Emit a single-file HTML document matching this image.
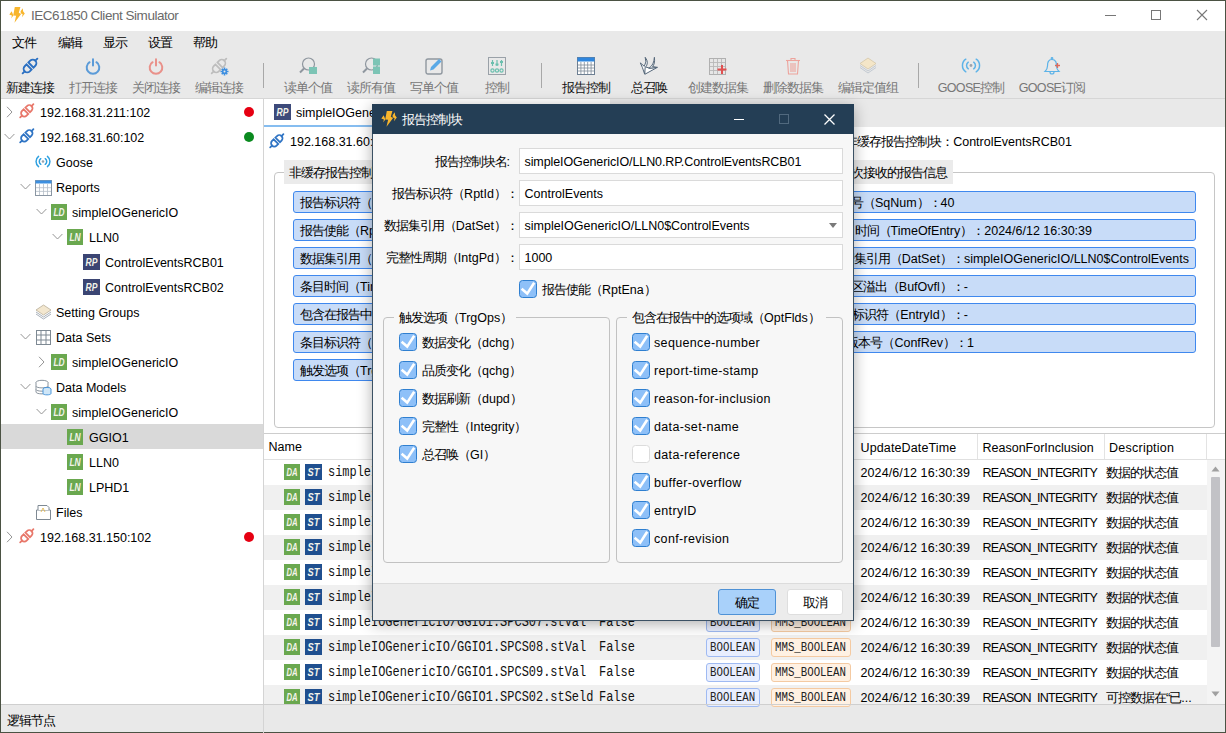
<!DOCTYPE html><html><head><meta charset="utf-8"><style>
*{box-sizing:border-box}
html,body{margin:0;padding:0}
body{width:1226px;height:733px;overflow:hidden;position:relative;background:#4b5243;font-family:"Liberation Sans",sans-serif;font-size:13px;color:#000}
.a{position:absolute}
.t{white-space:nowrap}
svg{overflow:visible}
</style></head><body><div class="a" style="left:1px;top:1px;width:1224px;height:731px;background:#ffffff;"></div><svg class="a" style="left:0px;top:0px" width="30" height="30" viewBox="0 0 30 30"><path d="M14.8 7.1 L20.4 7.1 L18.8 12.8 L21.1 14.1 L14.5 22.7 L16.1 15.8 L13.2 15.5 Z" fill="#f8b62d"/><path d="M9.3 14.6 L11.7 11.3 L12.6 13.6 L13.3 15.6 L11.2 18.6 L11.9 15.4 Z" fill="#f8b62d"/><path d="M20.6 11.2 L22.7 8.3 L23.2 11.6 L24.8 13.6 L22 17.3 L22.6 14 L20.8 13.4 Z" fill="#f8b62d"/></svg><div class="a t" style="left:31px;top:5.699999999999999px;height:20px;line-height:20px;font-size:13.5px;color:#6a6a6a;letter-spacing:-0.47px;">IEC61850 Client Simulator</div><div class="a" style="left:1105px;top:15px;width:11px;height:1px;background:#777;"></div><div class="a" style="left:1151px;top:10px;width:10px;height:10px;background:none;border:1px solid #777"></div><svg class="a" style="left:1196px;top:9px" width="12" height="12" viewBox="0 0 12 12"><path d="M1 1 L11 11 M11 1 L1 11" stroke="#777" stroke-width="1.1"/></svg><div class="a" style="left:1px;top:31px;width:1224px;height:67px;background:#e9e9e9;"></div><div class="a" style="left:1px;top:98px;width:1224px;height:1px;background:#d6d6d6;"></div><div class="a t" style="left:12px;top:33.0px;height:20px;line-height:20px;font-size:13px;color:#000;letter-spacing:-1.0px;">文件</div><div class="a t" style="left:58px;top:33.0px;height:20px;line-height:20px;font-size:13px;color:#000;letter-spacing:-1.0px;">编辑</div><div class="a t" style="left:103px;top:33.0px;height:20px;line-height:20px;font-size:13px;color:#000;letter-spacing:-1.0px;">显示</div><div class="a t" style="left:148px;top:33.0px;height:20px;line-height:20px;font-size:13px;color:#000;letter-spacing:-1.0px;">设置</div><div class="a t" style="left:193px;top:33.0px;height:20px;line-height:20px;font-size:13px;color:#000;letter-spacing:-1.0px;">帮助</div><svg class="a" style="left:18px;top:53.7px" width="24" height="24" viewBox="0 0 24 24"><g transform="rotate(-45 12 12)" fill="none" stroke="#2b70c2" stroke-width="1.9" stroke-linecap="round"><path d="M10.6 8.4 H8.1 A3.6 3.6 0 0 0 8.1 15.6 H10.6 Z"/><path d="M13.4 8.4 H15.9 A3.6 3.6 0 0 1 15.9 15.6 H13.4 Z"/><path d="M1.6 12 H4.5 M19.5 12 H22.4"/></g></svg><div class="a t" style="left:-20px;top:77.5px;height:20px;line-height:20px;font-size:13px;color:#111;letter-spacing:-1.0px;width:100px;text-align:center;">新建连接</div><svg class="a" style="left:85px;top:57.5px" width="16" height="16" viewBox="0 0 16 16"><g fill="none" stroke="#5b9bd8" stroke-width="2" stroke-linecap="round"><path d="M4.6 4.2 A6.3 6.3 0 1 0 11.4 4.2"/><line x1="8" y1="1.2" x2="8" y2="7.5"/></g></svg><div class="a t" style="left:43px;top:77.5px;height:20px;line-height:20px;font-size:13px;color:#777;letter-spacing:-1.0px;width:100px;text-align:center;">打开连接</div><svg class="a" style="left:148px;top:57.5px" width="16" height="16" viewBox="0 0 16 16"><g fill="none" stroke="#e9918a" stroke-width="2" stroke-linecap="round"><path d="M4.6 4.2 A6.3 6.3 0 1 0 11.4 4.2"/><line x1="8" y1="1.2" x2="8" y2="7.5"/></g></svg><div class="a t" style="left:106px;top:77.5px;height:20px;line-height:20px;font-size:13px;color:#777;letter-spacing:-1.0px;width:100px;text-align:center;">关闭连接</div><svg class="a" style="left:207px;top:53.7px" width="24" height="24" viewBox="0 0 24 24"><g transform="rotate(-45 12 12)" fill="none" stroke="#bdbdbd" stroke-width="1.7" stroke-linecap="round"><path d="M10.6 8.4 H8.1 A3.6 3.6 0 0 0 8.1 15.6 H10.6 Z"/><path d="M13.4 8.4 H15.9 A3.6 3.6 0 0 1 15.9 15.6 H13.4 Z"/><path d="M1.6 12 H4.5 M19.5 12 H22.4"/></g><g transform="translate(17.5 17.5)"><circle r="2.6" fill="#3d8fe0"/><g stroke="#3d8fe0" stroke-width="1.6"><path d="M0 -4 V4 M-4 0 H4 M-2.8 -2.8 L2.8 2.8 M2.8 -2.8 L-2.8 2.8"/></g><circle r="1" fill="#e9e9e9"/></g></svg><div class="a t" style="left:169px;top:77.5px;height:20px;line-height:20px;font-size:13px;color:#777;letter-spacing:-1.0px;width:100px;text-align:center;">编辑连接</div><svg class="a" style="left:299px;top:57px" width="18" height="18" viewBox="0 0 18 18"><circle cx="9.5" cy="7" r="6" fill="none" stroke="#8f979f" stroke-width="1.2"/><line x1="5" y1="11.5" x2="1" y2="15.5" stroke="#8f979f" stroke-width="2"/><rect x="10" y="10" width="8" height="7" fill="#7cc4b5"/></svg><div class="a t" style="left:258px;top:77.5px;height:20px;line-height:20px;font-size:13px;color:#777;letter-spacing:-1.0px;width:100px;text-align:center;">读单个值</div><svg class="a" style="left:362px;top:57px" width="18" height="18" viewBox="0 0 18 18"><circle cx="9.5" cy="7" r="6" fill="none" stroke="#8f979f" stroke-width="1.2"/><line x1="5" y1="11.5" x2="1" y2="15.5" stroke="#8f979f" stroke-width="2"/><rect x="11" y="1.5" width="7" height="7" fill="#7cc4b5"/><rect x="11" y="9.5" width="7" height="7.5" fill="#7cc4b5"/></svg><div class="a t" style="left:321px;top:77.5px;height:20px;line-height:20px;font-size:13px;color:#777;letter-spacing:-1.0px;width:100px;text-align:center;">读所有值</div><svg class="a" style="left:425px;top:57px" width="18" height="18" viewBox="0 0 18 18"><rect x="1" y="2" width="16" height="15" rx="2" fill="none" stroke="#8f979f" stroke-width="1.4"/><path d="M5 13.5 L6 10 L14 2 L16.5 4.5 L8.5 12.5 Z" fill="#5aa9e6"/></svg><div class="a t" style="left:384px;top:77.5px;height:20px;line-height:20px;font-size:13px;color:#777;letter-spacing:-1.0px;width:100px;text-align:center;">写单个值</div><svg class="a" style="left:488px;top:57px" width="18" height="18" viewBox="0 0 18 18"><rect x="0.5" y="0.5" width="17" height="17" fill="none" stroke="#9aa1a8" stroke-width="1"/><g stroke="#6bbfae" stroke-width="1.2" fill="none"><line x1="4.5" y1="3" x2="4.5" y2="9"/><line x1="9" y1="3" x2="9" y2="9"/><line x1="13.5" y1="3" x2="13.5" y2="9"/><circle cx="4.5" cy="13.5" r="1.6"/><circle cx="9" cy="13.5" r="1.6"/><circle cx="13.5" cy="13.5" r="1.6"/></g><rect x="3" y="5" width="3" height="2" fill="#6bbfae"/><rect x="7.5" y="6.5" width="3" height="2" fill="#6bbfae"/><rect x="12" y="4" width="3" height="2" fill="#6bbfae"/></svg><div class="a t" style="left:447px;top:77.5px;height:20px;line-height:20px;font-size:13px;color:#777;letter-spacing:-1.0px;width:100px;text-align:center;">控制</div><svg class="a" style="left:577px;top:57px" width="18" height="18" viewBox="0 0 18 18"><rect x="0.5" y="0.5" width="17" height="17" fill="#fff" stroke="#6d7f92" stroke-width="1"/><rect x="0.5" y="0.5" width="17" height="4" fill="#2f86de"/><g stroke="#7d8a98" stroke-width="0.8"><line x1="3.9" y1="5" x2="3.9" y2="17"/><line x1="7.3" y1="5" x2="7.3" y2="17"/><line x1="10.7" y1="5" x2="10.7" y2="17"/><line x1="14.1" y1="5" x2="14.1" y2="17"/><line x1="1" y1="8" x2="17" y2="8"/><line x1="1" y1="11" x2="17" y2="11"/><line x1="1" y1="14" x2="17" y2="14"/></g></svg><div class="a t" style="left:536px;top:77.5px;height:20px;line-height:20px;font-size:13px;color:#111;letter-spacing:-1.0px;width:100px;text-align:center;">报告控制</div><svg class="a" style="left:637px;top:54px" width="24" height="24" viewBox="0 0 24 24"><g fill="#fff" stroke="#56687a" stroke-width="1" stroke-linejoin="round"><path d="M7.3 12.6 L7.8 20.3 L20.3 13.4 L12.8 14.2 Z"/><path d="M3.3 8.9 Q5.5 13 7.6 20 L8.2 13.5 Q12.5 9 8.2 3.3 Q10 8 7.3 12.3 Z"/><path d="M11.8 14.3 Q17 11 17.4 3.3 Q18.2 10 15.5 12.5 L20.3 13.4 Z"/></g></svg><div class="a t" style="left:599px;top:77.5px;height:20px;line-height:20px;font-size:13px;color:#111;letter-spacing:-1.0px;width:100px;text-align:center;">总召唤</div><svg class="a" style="left:709px;top:57px" width="18" height="18" viewBox="0 0 18 18"><rect x="0.5" y="1.5" width="16" height="16" fill="#e6e6e6" stroke="#b0b0b0" stroke-width="1"/><g stroke="#b8b8b8" stroke-width="0.9"><line x1="4.5" y1="2" x2="4.5" y2="17"/><line x1="8.5" y1="2" x2="8.5" y2="17"/><line x1="12.5" y1="2" x2="12.5" y2="17"/><line x1="1" y1="5.5" x2="16" y2="5.5"/><line x1="1" y1="9.5" x2="16" y2="9.5"/><line x1="1" y1="13.5" x2="16" y2="13.5"/></g><path d="M13 8 V17 M8.5 12.5 H17.5" stroke="#e05050" stroke-width="2"/></svg><div class="a t" style="left:668px;top:77.5px;height:20px;line-height:20px;font-size:13px;color:#777;letter-spacing:-1.0px;width:100px;text-align:center;">创建数据集</div><svg class="a" style="left:785px;top:57px" width="16" height="18" viewBox="0 0 16 18"><g fill="none" stroke="#eda39c" stroke-width="1.1"><path d="M1 3.5 H15"/><path d="M6 3.5 V1.5 H10 V3.5"/><path d="M2.5 3.5 L3.5 17 H12.5 L13.5 3.5"/><path d="M6 6 V15 M8 6 V15 M10 6 V15"/></g></svg><div class="a t" style="left:743px;top:77.5px;height:20px;line-height:20px;font-size:13px;color:#777;letter-spacing:-1.0px;width:100px;text-align:center;">删除数据集</div><svg class="a" style="left:859px;top:57px" width="18" height="18" viewBox="0 0 18 18"><path d="M9 1 L17 6.5 L9 12 L1 6.5 Z" fill="#f4e6c8" stroke="#d4c7a8" stroke-width="0.8"/><path d="M1 8.5 L9 14 L17 8.5 M1 10.5 L9 16 L17 10.5" fill="none" stroke="#c3cad2" stroke-width="1"/></svg><div class="a t" style="left:818px;top:77.5px;height:20px;line-height:20px;font-size:13px;color:#777;letter-spacing:-1.0px;width:100px;text-align:center;">编辑定值组</div><svg class="a" style="left:962px;top:58px" width="18" height="15" viewBox="0 0 18 15"><g fill="none" stroke="#5db3e8" stroke-width="1.5" stroke-linecap="round"><path d="M3.8 1.2 A7.6 7.6 0 0 0 3.8 13.8"/><path d="M14.2 1.2 A7.6 7.6 0 0 1 14.2 13.8"/><path d="M6.3 4.2 A4 4 0 0 0 6.3 10.8"/><path d="M11.7 4.2 A4 4 0 0 1 11.7 10.8"/></g><circle cx="9" cy="7.5" r="1.4" fill="#9aa3ad"/></svg><div class="a t" style="left:921px;top:77.5px;height:20px;line-height:20px;font-size:13px;color:#777;letter-spacing:-1.0px;width:100px;text-align:center;"><span style="font-size:12.5px;letter-spacing:-0.7px">GOOSE</span>控制</div><svg class="a" style="left:1043.5px;top:57px" width="17" height="18" viewBox="0 0 17 18"><g fill="none" stroke="#5db3e8" stroke-width="1.2"><path d="M8 2.5 C4 2.5 3.5 6 3.5 9 C3.5 12 2.5 13 1 14.5 H15 C13.5 13 12.5 12 12.5 9 C12.5 6 12 2.5 8 2.5 Z"/><path d="M6 15 A2 2 0 0 0 10 15"/><circle cx="8" cy="1.5" r="0.8"/></g><path d="M11 8.5 H16 M13.5 6 V11" stroke="#e06a5a" stroke-width="1.3"/></svg><div class="a t" style="left:1002px;top:77.5px;height:20px;line-height:20px;font-size:13px;color:#777;letter-spacing:-1.0px;width:100px;text-align:center;"><span style="font-size:12.5px;letter-spacing:-0.7px">GOOSE</span>订阅</div><div class="a" style="left:263px;top:63px;width:1px;height:25px;background:#a8a8a8;"></div><div class="a" style="left:541px;top:63px;width:1px;height:25px;background:#a8a8a8;"></div><div class="a" style="left:918px;top:63px;width:1px;height:25px;background:#a8a8a8;"></div><div class="a" style="left:263px;top:99px;width:1px;height:634px;background:#d4d4d4;"></div><div class="a" style="left:1px;top:704px;width:1224px;height:1px;background:#cfcfcf;"></div><div class="a" style="left:1px;top:705px;width:1224px;height:27px;background:#e9e9e9;"></div><div class="a" style="left:263px;top:705px;width:1px;height:27px;background:#d4d4d4;"></div><div class="a t" style="left:7px;top:710.8px;height:20px;line-height:20px;font-size:13px;color:#000;letter-spacing:-1.0px;">逻辑节点</div><svg class="a" style="left:6.0px;top:105.5px" width="7" height="12" viewBox="0 0 7 12"><path d="M1 0.8 L6 6 L1 11.2" fill="none" stroke="#969696" stroke-width="1"/></svg><svg class="a" style="left:15.8px;top:100.2px" width="21.6" height="21.6" viewBox="0 0 24 24"><g transform="rotate(-45 12 12)" fill="none" stroke="#e8776a" stroke-width="2.0" stroke-linecap="round"><path d="M10.6 8.4 H8.1 A3.6 3.6 0 0 0 8.1 15.6 H10.6 Z"/><path d="M13.4 8.4 H15.9 A3.6 3.6 0 0 1 15.9 15.6 H13.4 Z"/><path d="M1.6 12 H4.5 M19.5 12 H22.4"/></g></svg><div class="a t" style="left:40px;top:103.0px;height:20px;line-height:20px;font-size:12.5px;color:#000;">192.168.31.211:102</div><svg class="a" style="left:244px;top:106.5px" width="10" height="10" viewBox="0 0 10 10"><circle cx="5" cy="5" r="5" fill="#e60012"/></svg><svg class="a" style="left:4.0px;top:133.0px" width="11" height="7" viewBox="0 0 11 7"><path d="M0.6 1 L5.5 6 L10.4 1" fill="none" stroke="#969696" stroke-width="1"/></svg><svg class="a" style="left:15.8px;top:125.2px" width="21.6" height="21.6" viewBox="0 0 24 24"><g transform="rotate(-45 12 12)" fill="none" stroke="#2f74c4" stroke-width="2.0" stroke-linecap="round"><path d="M10.6 8.4 H8.1 A3.6 3.6 0 0 0 8.1 15.6 H10.6 Z"/><path d="M13.4 8.4 H15.9 A3.6 3.6 0 0 1 15.9 15.6 H13.4 Z"/><path d="M1.6 12 H4.5 M19.5 12 H22.4"/></g></svg><div class="a t" style="left:40px;top:128.0px;height:20px;line-height:20px;font-size:12.5px;color:#000;">192.168.31.60:102</div><svg class="a" style="left:244px;top:131.5px" width="10" height="10" viewBox="0 0 10 10"><circle cx="5" cy="5" r="5" fill="#0a8a1f"/></svg><svg class="a" style="left:35px;top:155.0px" width="16" height="13" viewBox="0 0 16 14"><g fill="none" stroke="#2ea0e0" stroke-width="1.6" stroke-linecap="round"><path d="M3.2 1.5 A7 7 0 0 0 3.2 12.5"/><path d="M12.8 1.5 A7 7 0 0 1 12.8 12.5"/><path d="M5.6 4 A3.6 3.6 0 0 0 5.6 10"/><path d="M10.4 4 A3.6 3.6 0 0 1 10.4 10"/></g><circle cx="8" cy="7" r="1.4" fill="#9aa3ad"/></svg><div class="a t" style="left:56px;top:153.0px;height:20px;line-height:20px;font-size:12.5px;color:#000;">Goose</div><svg class="a" style="left:20.0px;top:183.0px" width="11" height="7" viewBox="0 0 11 7"><path d="M0.6 1 L5.5 6 L10.4 1" fill="none" stroke="#969696" stroke-width="1"/></svg><svg class="a" style="left:35px;top:178.5px" width="17" height="17" viewBox="0 0 17 17"><rect x="0.5" y="1.5" width="16" height="15" fill="#fff" stroke="#8a96a3" stroke-width="1"/><rect x="0.5" y="1.5" width="16" height="3" fill="#3d8fe0"/><line x1="4.5" y1="5" x2="4.5" y2="16" stroke="#b5bec8" stroke-width="0.8"/><line x1="8.5" y1="5" x2="8.5" y2="16" stroke="#b5bec8" stroke-width="0.8"/><line x1="12.5" y1="5" x2="12.5" y2="16" stroke="#b5bec8" stroke-width="0.8"/><line x1="1" y1="8.7" x2="16" y2="8.7" stroke="#b5bec8" stroke-width="0.8"/><line x1="1" y1="12.4" x2="16" y2="12.4" stroke="#b5bec8" stroke-width="0.8"/></svg><div class="a t" style="left:56px;top:178.0px;height:20px;line-height:20px;font-size:12.5px;color:#000;">Reports</div><svg class="a" style="left:36.0px;top:208.0px" width="11" height="7" viewBox="0 0 11 7"><path d="M0.6 1 L5.5 6 L10.4 1" fill="none" stroke="#969696" stroke-width="1"/></svg><svg class="a" style="left:51px;top:203.5px" width="16" height="16" viewBox="0 0 16 16"><rect x="0" y="0" width="16" height="16" fill="#6aa84f"/><text x="2.4000000000000004" y="11.78" font-family="Liberation Sans" font-style="italic" font-weight="bold" font-size="10.5" fill="#f3f3ea" textLength="11.2" lengthAdjust="spacingAndGlyphs">LD</text></svg><div class="a t" style="left:72px;top:203.0px;height:20px;line-height:20px;font-size:12.5px;color:#000;">simpleIOGenericIO</div><svg class="a" style="left:52.0px;top:233.0px" width="11" height="7" viewBox="0 0 11 7"><path d="M0.6 1 L5.5 6 L10.4 1" fill="none" stroke="#969696" stroke-width="1"/></svg><svg class="a" style="left:67px;top:228.5px" width="16" height="16" viewBox="0 0 16 16"><rect x="0" y="0" width="16" height="16" fill="#6aa84f"/><text x="2.4000000000000004" y="11.78" font-family="Liberation Sans" font-style="italic" font-weight="bold" font-size="10.5" fill="#f3f3ea" textLength="11.2" lengthAdjust="spacingAndGlyphs">LN</text></svg><div class="a t" style="left:89px;top:228.0px;height:20px;line-height:20px;font-size:12.5px;color:#000;">LLN0</div><svg class="a" style="left:83px;top:253.5px" width="17" height="16" viewBox="0 0 17 16"><rect x="0" y="0" width="17" height="16" fill="#3b4573"/><text x="2.5500000000000007" y="11.78" font-family="Liberation Sans" font-style="italic" font-weight="bold" font-size="10.5" fill="#f3f3ea" textLength="11.899999999999999" lengthAdjust="spacingAndGlyphs">RP</text></svg><div class="a t" style="left:105px;top:253.0px;height:20px;line-height:20px;font-size:12.5px;color:#000;">ControlEventsRCB01</div><svg class="a" style="left:83px;top:278.5px" width="17" height="16" viewBox="0 0 17 16"><rect x="0" y="0" width="17" height="16" fill="#3b4573"/><text x="2.5500000000000007" y="11.78" font-family="Liberation Sans" font-style="italic" font-weight="bold" font-size="10.5" fill="#f3f3ea" textLength="11.899999999999999" lengthAdjust="spacingAndGlyphs">RP</text></svg><div class="a t" style="left:105px;top:278.0px;height:20px;line-height:20px;font-size:12.5px;color:#000;">ControlEventsRCB02</div><svg class="a" style="left:35px;top:303.5px" width="17" height="17" viewBox="0 0 17 17"><path d="M8.5 1 L16 6 L8.5 11 L1 6 Z" fill="#f3e7cf" stroke="#b8ad98" stroke-width="0.8"/><path d="M1 8 L8.5 13 L16 8 M1 10 L8.5 15 L16 10" fill="none" stroke="#a9b1ba" stroke-width="1"/></svg><div class="a t" style="left:56px;top:303.0px;height:20px;line-height:20px;font-size:12.5px;color:#000;">Setting Groups</div><svg class="a" style="left:20.0px;top:333.0px" width="11" height="7" viewBox="0 0 11 7"><path d="M0.6 1 L5.5 6 L10.4 1" fill="none" stroke="#969696" stroke-width="1"/></svg><svg class="a" style="left:35px;top:328.5px" width="17" height="17" viewBox="0 0 17 17"><rect x="1.5" y="1.5" width="14" height="14" fill="#fff" stroke="#7e8993" stroke-width="1"/><path d="M6 1.5 V15.5 M11 1.5 V15.5 M1.5 6 H15.5 M1.5 11 H15.5" stroke="#7e8993" stroke-width="1"/></svg><div class="a t" style="left:56px;top:328.0px;height:20px;line-height:20px;font-size:12.5px;color:#000;">Data Sets</div><svg class="a" style="left:38.0px;top:355.5px" width="7" height="12" viewBox="0 0 7 12"><path d="M1 0.8 L6 6 L1 11.2" fill="none" stroke="#969696" stroke-width="1"/></svg><svg class="a" style="left:51px;top:353.5px" width="16" height="16" viewBox="0 0 16 16"><rect x="0" y="0" width="16" height="16" fill="#6aa84f"/><text x="2.4000000000000004" y="11.78" font-family="Liberation Sans" font-style="italic" font-weight="bold" font-size="10.5" fill="#f3f3ea" textLength="11.2" lengthAdjust="spacingAndGlyphs">LD</text></svg><div class="a t" style="left:72px;top:353.0px;height:20px;line-height:20px;font-size:12.5px;color:#000;">simpleIOGenericIO</div><svg class="a" style="left:20.0px;top:383.0px" width="11" height="7" viewBox="0 0 11 7"><path d="M0.6 1 L5.5 6 L10.4 1" fill="none" stroke="#969696" stroke-width="1"/></svg><svg class="a" style="left:35px;top:378.5px" width="17" height="17" viewBox="0 0 17 17"><g fill="#fff" stroke="#8a949e" stroke-width="1"><ellipse cx="7" cy="3.5" rx="6" ry="2.2"/><path d="M1 3.5 V13 C1 15.5 13 15.5 13 13 V3.5"/><path d="M1 7 C1 9.5 13 9.5 13 7 M1 10.3 C1 12.8 13 12.8 13 10.3"/></g><g fill="#cfe6f7" stroke="#3d8fd8" stroke-width="0.9"><ellipse cx="12" cy="10" rx="4" ry="1.6"/><path d="M8 10 V14.5 C8 16.3 16 16.3 16 14.5 V10"/></g></svg><div class="a t" style="left:56px;top:378.0px;height:20px;line-height:20px;font-size:12.5px;color:#000;">Data Models</div><svg class="a" style="left:36.0px;top:408.0px" width="11" height="7" viewBox="0 0 11 7"><path d="M0.6 1 L5.5 6 L10.4 1" fill="none" stroke="#969696" stroke-width="1"/></svg><svg class="a" style="left:51px;top:403.5px" width="16" height="16" viewBox="0 0 16 16"><rect x="0" y="0" width="16" height="16" fill="#6aa84f"/><text x="2.4000000000000004" y="11.78" font-family="Liberation Sans" font-style="italic" font-weight="bold" font-size="10.5" fill="#f3f3ea" textLength="11.2" lengthAdjust="spacingAndGlyphs">LD</text></svg><div class="a t" style="left:72px;top:403.0px;height:20px;line-height:20px;font-size:12.5px;color:#000;">simpleIOGenericIO</div><div class="a" style="left:1px;top:424px;width:262px;height:25px;background:#d9d9d9;"></div><svg class="a" style="left:67px;top:428.5px" width="16" height="16" viewBox="0 0 16 16"><rect x="0" y="0" width="16" height="16" fill="#6aa84f"/><text x="2.4000000000000004" y="11.78" font-family="Liberation Sans" font-style="italic" font-weight="bold" font-size="10.5" fill="#f3f3ea" textLength="11.2" lengthAdjust="spacingAndGlyphs">LN</text></svg><div class="a t" style="left:89px;top:428.0px;height:20px;line-height:20px;font-size:12.5px;color:#000;">GGIO1</div><svg class="a" style="left:67px;top:453.5px" width="16" height="16" viewBox="0 0 16 16"><rect x="0" y="0" width="16" height="16" fill="#6aa84f"/><text x="2.4000000000000004" y="11.78" font-family="Liberation Sans" font-style="italic" font-weight="bold" font-size="10.5" fill="#f3f3ea" textLength="11.2" lengthAdjust="spacingAndGlyphs">LN</text></svg><div class="a t" style="left:89px;top:453.0px;height:20px;line-height:20px;font-size:12.5px;color:#000;">LLN0</div><svg class="a" style="left:67px;top:478.5px" width="16" height="16" viewBox="0 0 16 16"><rect x="0" y="0" width="16" height="16" fill="#6aa84f"/><text x="2.4000000000000004" y="11.78" font-family="Liberation Sans" font-style="italic" font-weight="bold" font-size="10.5" fill="#f3f3ea" textLength="11.2" lengthAdjust="spacingAndGlyphs">LN</text></svg><div class="a t" style="left:89px;top:478.0px;height:20px;line-height:20px;font-size:12.5px;color:#000;">LPHD1</div><svg class="a" style="left:35px;top:503.5px" width="17" height="17" viewBox="0 0 17 17"><path d="M1.5 6 H15.5 V15.5 H1.5 Z" fill="#fff" stroke="#7e8993" stroke-width="1"/><path d="M3 6 V1.5 H12 L14 3.5 V6" fill="#fff" stroke="#7e8993" stroke-width="1"/><path d="M6 8 L8 4 L10 8" fill="none" stroke="#e0b040" stroke-width="0.8"/></svg><div class="a t" style="left:56px;top:503.0px;height:20px;line-height:20px;font-size:12.5px;color:#000;">Files</div><svg class="a" style="left:6.0px;top:530.5px" width="7" height="12" viewBox="0 0 7 12"><path d="M1 0.8 L6 6 L1 11.2" fill="none" stroke="#969696" stroke-width="1"/></svg><svg class="a" style="left:15.8px;top:525.2px" width="21.6" height="21.6" viewBox="0 0 24 24"><g transform="rotate(-45 12 12)" fill="none" stroke="#e8776a" stroke-width="2.0" stroke-linecap="round"><path d="M10.6 8.4 H8.1 A3.6 3.6 0 0 0 8.1 15.6 H10.6 Z"/><path d="M13.4 8.4 H15.9 A3.6 3.6 0 0 1 15.9 15.6 H13.4 Z"/><path d="M1.6 12 H4.5 M19.5 12 H22.4"/></g></svg><div class="a t" style="left:40px;top:528.0px;height:20px;line-height:20px;font-size:12.5px;color:#000;">192.168.31.150:102</div><svg class="a" style="left:244px;top:531.5px" width="10" height="10" viewBox="0 0 10 10"><circle cx="5" cy="5" r="5" fill="#e60012"/></svg><div class="a" style="left:264px;top:99px;width:961px;height:28px;background:#e9e9e9;"></div><div class="a" style="left:264px;top:99px;width:346px;height:28px;background:#ffffff;"></div><div class="a" style="left:264px;top:125px;width:346px;height:2px;background:#86bdf0;"></div><svg class="a" style="left:274px;top:104px" width="17" height="16" viewBox="0 0 17 16"><rect x="0" y="0" width="17" height="16" fill="#3d4a7a"/><text x="2.5500000000000007" y="11.78" font-family="Liberation Sans" font-style="italic" font-weight="bold" font-size="10.5" fill="#f3f3ea" textLength="11.899999999999999" lengthAdjust="spacingAndGlyphs">RP</text></svg><div class="a t" style="left:296px;top:103.0px;height:20px;line-height:20px;font-size:12.5px;color:#000;">simpleIOGenericIO/LLN0.RP.ControlEventsRCB01</div><svg class="a" style="left:266px;top:130.3px" width="21.6" height="21.6" viewBox="0 0 24 24"><g transform="rotate(-45 12 12)" fill="none" stroke="#2f74c4" stroke-width="2.0" stroke-linecap="round"><path d="M10.6 8.4 H8.1 A3.6 3.6 0 0 0 8.1 15.6 H10.6 Z"/><path d="M13.4 8.4 H15.9 A3.6 3.6 0 0 1 15.9 15.6 H13.4 Z"/><path d="M1.6 12 H4.5 M19.5 12 H22.4"/></g></svg><div class="a t" style="left:290px;top:131.8px;height:20px;line-height:20px;font-size:12.5px;color:#000;">192.168.31.60:102</div><div class="a t" style="left:772px;top:131.8px;height:20px;line-height:20px;font-size:13px;color:#000;letter-spacing:-1.0px;width:300px;text-align:right;">非缓存报告控制块：<span style="font-size:12.5px;letter-spacing:0px">ControlEventsRCB01</span></div><div class="a" style="left:274px;top:172px;width:520px;height:256px;background:none;border:1px solid #c6c6c6;border-radius:4px"></div><div class="a" style="left:812px;top:172px;width:403px;height:256px;background:none;border:1px solid #c6c6c6;border-radius:4px"></div><div class="a" style="left:284px;top:160px;width:150px;height:24px;background:#ebebeb;"></div><div class="a t" style="left:289px;top:163.0px;height:20px;line-height:20px;font-size:13px;color:#000;letter-spacing:-1.0px;">非缓存报告控制块参数</div><div class="a" style="left:800px;top:160px;width:153px;height:24px;background:#ebebeb;"></div><div class="a t" style="left:653px;top:163.0px;height:20px;line-height:20px;font-size:13px;color:#000;letter-spacing:-1.0px;width:294px;text-align:right;">最近一次接收的报告信息</div><div class="a" style="left:293px;top:191px;width:490px;height:22px;background:#c8dcf8;border:1px solid #3f88ee;border-radius:3px"></div><div class="a t" style="left:300px;top:193.0px;height:20px;line-height:20px;font-size:13px;color:#000;letter-spacing:-1.0px;">报告标识符（<span style="font-size:12.5px;letter-spacing:0px">RptId</span>）：<span style="font-size:12.5px;letter-spacing:0px">ControlEvents</span></div><div class="a" style="left:293px;top:219px;width:490px;height:22px;background:#c8dcf8;border:1px solid #3f88ee;border-radius:3px"></div><div class="a t" style="left:300px;top:221.0px;height:20px;line-height:20px;font-size:13px;color:#000;letter-spacing:-1.0px;">报告使能（<span style="font-size:12.5px;letter-spacing:0px">RptEna</span>）：<span style="font-size:12.5px;letter-spacing:0px">True</span></div><div class="a" style="left:293px;top:247px;width:490px;height:22px;background:#c8dcf8;border:1px solid #3f88ee;border-radius:3px"></div><div class="a t" style="left:300px;top:249.0px;height:20px;line-height:20px;font-size:13px;color:#000;letter-spacing:-1.0px;">数据集引用（<span style="font-size:12.5px;letter-spacing:0px">DatSet</span>）：<span style="font-size:12.5px;letter-spacing:0px">simpleIOGenericIO/LLN0$ControlEvents</span></div><div class="a" style="left:293px;top:275px;width:490px;height:22px;background:#c8dcf8;border:1px solid #3f88ee;border-radius:3px"></div><div class="a t" style="left:300px;top:277.0px;height:20px;line-height:20px;font-size:13px;color:#000;letter-spacing:-1.0px;">条目时间（<span style="font-size:12.5px;letter-spacing:0px">TimeOfEntry</span>）：<span style="font-size:12.5px;letter-spacing:0px">-</span></div><div class="a" style="left:293px;top:303px;width:490px;height:22px;background:#c8dcf8;border:1px solid #3f88ee;border-radius:3px"></div><div class="a t" style="left:300px;top:305.0px;height:20px;line-height:20px;font-size:13px;color:#000;letter-spacing:-1.0px;">包含在报告中的选项域（<span style="font-size:12.5px;letter-spacing:0px">OptFlds</span>）：</div><div class="a" style="left:293px;top:331px;width:490px;height:22px;background:#c8dcf8;border:1px solid #3f88ee;border-radius:3px"></div><div class="a t" style="left:300px;top:333.0px;height:20px;line-height:20px;font-size:13px;color:#000;letter-spacing:-1.0px;">条目标识符（<span style="font-size:12.5px;letter-spacing:0px">EntryId</span>）：<span style="font-size:12.5px;letter-spacing:0px">-</span></div><div class="a" style="left:293px;top:359px;width:490px;height:22px;background:#c8dcf8;border:1px solid #3f88ee;border-radius:3px"></div><div class="a t" style="left:300px;top:361.0px;height:20px;line-height:20px;font-size:13px;color:#000;letter-spacing:-1.0px;">触发选项（<span style="font-size:12.5px;letter-spacing:0px">TrgOps</span>）：</div><div class="a" style="left:830px;top:191px;width:366px;height:22px;background:#c8dcf8;border:1px solid #3f88ee;border-radius:3px"></div><div class="a t" style="left:554.5px;top:193.0px;height:20px;line-height:20px;font-size:13px;color:#000;letter-spacing:-1.0px;width:400px;text-align:right;">序号（<span style="font-size:12.5px;letter-spacing:0px">SqNum</span>）：<span style="font-size:12.5px;letter-spacing:0px">40</span></div><div class="a" style="left:830px;top:219px;width:366px;height:22px;background:#c8dcf8;border:1px solid #3f88ee;border-radius:3px"></div><div class="a t" style="left:692px;top:221.0px;height:20px;line-height:20px;font-size:13px;color:#000;letter-spacing:-1.0px;width:400px;text-align:right;">条目时间（<span style="font-size:12.5px;letter-spacing:0px">TimeOfEntry</span>）：<span style="font-size:12.5px;letter-spacing:0px">2024/6/12 16:30:39</span></div><div class="a" style="left:830px;top:247px;width:366px;height:22px;background:#c8dcf8;border:1px solid #3f88ee;border-radius:3px"></div><div class="a t" style="left:789px;top:249.0px;height:20px;line-height:20px;font-size:13px;color:#000;letter-spacing:-1.0px;width:400px;text-align:right;">数据集引用（<span style="font-size:12.5px;letter-spacing:0px">DatSet</span>）：<span style="font-size:12.5px;letter-spacing:0px">simpleIOGenericIO/LLN0$ControlEvents</span></div><div class="a" style="left:830px;top:275px;width:366px;height:22px;background:#c8dcf8;border:1px solid #3f88ee;border-radius:3px"></div><div class="a t" style="left:568px;top:277.0px;height:20px;line-height:20px;font-size:13px;color:#000;letter-spacing:-1.0px;width:400px;text-align:right;">缓冲区溢出（<span style="font-size:12.5px;letter-spacing:0px">BufOvfl</span>）：<span style="font-size:12.5px;letter-spacing:0px">-</span></div><div class="a" style="left:830px;top:303px;width:366px;height:22px;background:#c8dcf8;border:1px solid #3f88ee;border-radius:3px"></div><div class="a t" style="left:568px;top:305.0px;height:20px;line-height:20px;font-size:13px;color:#000;letter-spacing:-1.0px;width:400px;text-align:right;">条目标识符（<span style="font-size:12.5px;letter-spacing:0px">EntryId</span>）：<span style="font-size:12.5px;letter-spacing:0px">-</span></div><div class="a" style="left:830px;top:331px;width:366px;height:22px;background:#c8dcf8;border:1px solid #3f88ee;border-radius:3px"></div><div class="a t" style="left:574px;top:333.0px;height:20px;line-height:20px;font-size:13px;color:#000;letter-spacing:-1.0px;width:400px;text-align:right;">配置版本号（<span style="font-size:12.5px;letter-spacing:0px">ConfRev</span>）：<span style="font-size:12.5px;letter-spacing:0px">1</span></div><div class="a" style="left:264px;top:433px;width:961px;height:1px;background:#cdcdcd;"></div><div class="a" style="left:264px;top:459px;width:961px;height:1px;background:#e0e0e0;"></div><div class="a t" style="left:268.5px;top:436.8px;height:20px;line-height:20px;font-size:12.5px;color:#000;">Name</div><div class="a t" style="left:860.5px;top:437.5px;height:20px;line-height:20px;font-size:12.5px;color:#000;letter-spacing:0.13px;">UpdateDateTime</div><div class="a t" style="left:982.5px;top:437.5px;height:20px;line-height:20px;font-size:12.5px;color:#000;">ReasonForInclusion</div><div class="a t" style="left:1109px;top:437.5px;height:20px;line-height:20px;font-size:12.5px;color:#000;letter-spacing:0.25px;">Description</div><div class="a" style="left:977px;top:434px;width:1px;height:25px;background:#e3e3e3;"></div><div class="a" style="left:1104px;top:434px;width:1px;height:25px;background:#e3e3e3;"></div><div class="a" style="left:1206px;top:434px;width:1px;height:25px;background:#e3e3e3;"></div><svg class="a" style="left:284px;top:463.5px" width="16" height="16" viewBox="0 0 16 16"><rect x="0" y="0" width="16" height="16" fill="#6aa84f"/><text x="2.4000000000000004" y="11.6" font-family="Liberation Sans" font-style="italic" font-weight="bold" font-size="10" fill="#f3f3ea" textLength="11.2" lengthAdjust="spacingAndGlyphs">DA</text></svg><svg class="a" style="left:305px;top:463.5px" width="17" height="16" viewBox="0 0 17 16"><rect x="0" y="0" width="17" height="16" fill="#1f4f8f"/><text x="2.5500000000000007" y="11.6" font-family="Liberation Sans" font-style="italic" font-weight="bold" font-size="10" fill="#f3f3ea" textLength="11.899999999999999" lengthAdjust="spacingAndGlyphs">ST</text></svg><div class="a t" style="left:327.50px;top:462.17px;height:20px;line-height:20px;font-family:'Liberation Mono',monospace;font-size:14px;color:#111;transform:scaleX(0.8536);transform-origin:0 50%">simpleIOGenericIO/GGIO1.SPCS01.stVal</div><div class="a t" style="left:598.50px;top:462.17px;height:20px;line-height:20px;font-family:'Liberation Mono',monospace;font-size:14px;color:#111;transform:scaleX(0.8536);transform-origin:0 50%">False</div><div class="a" style="left:705.5px;top:463.0px;width:54px;height:18.5px;background:#e8eefe;border:1px solid #9fbaf2;border-radius:3px"></div><div class="a t" style="left:709.50px;top:462.60px;height:20px;line-height:20px;font-family:'Liberation Mono',monospace;font-size:12.4px;color:#222;transform:scaleX(0.8669);transform-origin:0 50%">BOOLEAN</div><div class="a" style="left:770.5px;top:463.0px;width:80.5px;height:18.5px;background:#fff1e3;border:1px solid #f4caa2;border-radius:3px"></div><div class="a t" style="left:774.50px;top:462.60px;height:20px;line-height:20px;font-family:'Liberation Mono',monospace;font-size:12.4px;color:#222;transform:scaleX(0.8669);transform-origin:0 50%">MMS_BOOLEAN</div><div class="a t" style="left:860.5px;top:462.5px;height:20px;line-height:20px;font-size:12.5px;color:#000;letter-spacing:0.1px;">2024/6/12 16:30:39</div><div class="a t" style="left:982.5px;top:462.5px;height:20px;line-height:20px;font-size:12.5px;color:#000;letter-spacing:-0.74px;">REASON_INTEGRITY</div><div class="a t" style="left:1106px;top:462.5px;height:20px;line-height:20px;font-size:13px;color:#000;letter-spacing:-1.0px;">数据的状态值</div><div class="a" style="left:264px;top:485px;width:943px;height:25px;background:#f0f0f0;"></div><svg class="a" style="left:284px;top:488.5px" width="16" height="16" viewBox="0 0 16 16"><rect x="0" y="0" width="16" height="16" fill="#6aa84f"/><text x="2.4000000000000004" y="11.6" font-family="Liberation Sans" font-style="italic" font-weight="bold" font-size="10" fill="#f3f3ea" textLength="11.2" lengthAdjust="spacingAndGlyphs">DA</text></svg><svg class="a" style="left:305px;top:488.5px" width="17" height="16" viewBox="0 0 17 16"><rect x="0" y="0" width="17" height="16" fill="#1f4f8f"/><text x="2.5500000000000007" y="11.6" font-family="Liberation Sans" font-style="italic" font-weight="bold" font-size="10" fill="#f3f3ea" textLength="11.899999999999999" lengthAdjust="spacingAndGlyphs">ST</text></svg><div class="a t" style="left:327.50px;top:487.17px;height:20px;line-height:20px;font-family:'Liberation Mono',monospace;font-size:14px;color:#111;transform:scaleX(0.8536);transform-origin:0 50%">simpleIOGenericIO/GGIO1.SPCS02.stVal</div><div class="a t" style="left:598.50px;top:487.17px;height:20px;line-height:20px;font-family:'Liberation Mono',monospace;font-size:14px;color:#111;transform:scaleX(0.8536);transform-origin:0 50%">False</div><div class="a" style="left:705.5px;top:488.0px;width:54px;height:18.5px;background:#e8eefe;border:1px solid #9fbaf2;border-radius:3px"></div><div class="a t" style="left:709.50px;top:487.60px;height:20px;line-height:20px;font-family:'Liberation Mono',monospace;font-size:12.4px;color:#222;transform:scaleX(0.8669);transform-origin:0 50%">BOOLEAN</div><div class="a" style="left:770.5px;top:488.0px;width:80.5px;height:18.5px;background:#fff1e3;border:1px solid #f4caa2;border-radius:3px"></div><div class="a t" style="left:774.50px;top:487.60px;height:20px;line-height:20px;font-family:'Liberation Mono',monospace;font-size:12.4px;color:#222;transform:scaleX(0.8669);transform-origin:0 50%">MMS_BOOLEAN</div><div class="a t" style="left:860.5px;top:487.5px;height:20px;line-height:20px;font-size:12.5px;color:#000;letter-spacing:0.1px;">2024/6/12 16:30:39</div><div class="a t" style="left:982.5px;top:487.5px;height:20px;line-height:20px;font-size:12.5px;color:#000;letter-spacing:-0.74px;">REASON_INTEGRITY</div><div class="a t" style="left:1106px;top:487.5px;height:20px;line-height:20px;font-size:13px;color:#000;letter-spacing:-1.0px;">数据的状态值</div><svg class="a" style="left:284px;top:513.5px" width="16" height="16" viewBox="0 0 16 16"><rect x="0" y="0" width="16" height="16" fill="#6aa84f"/><text x="2.4000000000000004" y="11.6" font-family="Liberation Sans" font-style="italic" font-weight="bold" font-size="10" fill="#f3f3ea" textLength="11.2" lengthAdjust="spacingAndGlyphs">DA</text></svg><svg class="a" style="left:305px;top:513.5px" width="17" height="16" viewBox="0 0 17 16"><rect x="0" y="0" width="17" height="16" fill="#1f4f8f"/><text x="2.5500000000000007" y="11.6" font-family="Liberation Sans" font-style="italic" font-weight="bold" font-size="10" fill="#f3f3ea" textLength="11.899999999999999" lengthAdjust="spacingAndGlyphs">ST</text></svg><div class="a t" style="left:327.50px;top:512.17px;height:20px;line-height:20px;font-family:'Liberation Mono',monospace;font-size:14px;color:#111;transform:scaleX(0.8536);transform-origin:0 50%">simpleIOGenericIO/GGIO1.SPCS03.stVal</div><div class="a t" style="left:598.50px;top:512.17px;height:20px;line-height:20px;font-family:'Liberation Mono',monospace;font-size:14px;color:#111;transform:scaleX(0.8536);transform-origin:0 50%">False</div><div class="a" style="left:705.5px;top:513.0px;width:54px;height:18.5px;background:#e8eefe;border:1px solid #9fbaf2;border-radius:3px"></div><div class="a t" style="left:709.50px;top:512.60px;height:20px;line-height:20px;font-family:'Liberation Mono',monospace;font-size:12.4px;color:#222;transform:scaleX(0.8669);transform-origin:0 50%">BOOLEAN</div><div class="a" style="left:770.5px;top:513.0px;width:80.5px;height:18.5px;background:#fff1e3;border:1px solid #f4caa2;border-radius:3px"></div><div class="a t" style="left:774.50px;top:512.60px;height:20px;line-height:20px;font-family:'Liberation Mono',monospace;font-size:12.4px;color:#222;transform:scaleX(0.8669);transform-origin:0 50%">MMS_BOOLEAN</div><div class="a t" style="left:860.5px;top:512.5px;height:20px;line-height:20px;font-size:12.5px;color:#000;letter-spacing:0.1px;">2024/6/12 16:30:39</div><div class="a t" style="left:982.5px;top:512.5px;height:20px;line-height:20px;font-size:12.5px;color:#000;letter-spacing:-0.74px;">REASON_INTEGRITY</div><div class="a t" style="left:1106px;top:512.5px;height:20px;line-height:20px;font-size:13px;color:#000;letter-spacing:-1.0px;">数据的状态值</div><div class="a" style="left:264px;top:535px;width:943px;height:25px;background:#f0f0f0;"></div><svg class="a" style="left:284px;top:538.5px" width="16" height="16" viewBox="0 0 16 16"><rect x="0" y="0" width="16" height="16" fill="#6aa84f"/><text x="2.4000000000000004" y="11.6" font-family="Liberation Sans" font-style="italic" font-weight="bold" font-size="10" fill="#f3f3ea" textLength="11.2" lengthAdjust="spacingAndGlyphs">DA</text></svg><svg class="a" style="left:305px;top:538.5px" width="17" height="16" viewBox="0 0 17 16"><rect x="0" y="0" width="17" height="16" fill="#1f4f8f"/><text x="2.5500000000000007" y="11.6" font-family="Liberation Sans" font-style="italic" font-weight="bold" font-size="10" fill="#f3f3ea" textLength="11.899999999999999" lengthAdjust="spacingAndGlyphs">ST</text></svg><div class="a t" style="left:327.50px;top:537.17px;height:20px;line-height:20px;font-family:'Liberation Mono',monospace;font-size:14px;color:#111;transform:scaleX(0.8536);transform-origin:0 50%">simpleIOGenericIO/GGIO1.SPCS04.stVal</div><div class="a t" style="left:598.50px;top:537.17px;height:20px;line-height:20px;font-family:'Liberation Mono',monospace;font-size:14px;color:#111;transform:scaleX(0.8536);transform-origin:0 50%">False</div><div class="a" style="left:705.5px;top:538.0px;width:54px;height:18.5px;background:#e8eefe;border:1px solid #9fbaf2;border-radius:3px"></div><div class="a t" style="left:709.50px;top:537.60px;height:20px;line-height:20px;font-family:'Liberation Mono',monospace;font-size:12.4px;color:#222;transform:scaleX(0.8669);transform-origin:0 50%">BOOLEAN</div><div class="a" style="left:770.5px;top:538.0px;width:80.5px;height:18.5px;background:#fff1e3;border:1px solid #f4caa2;border-radius:3px"></div><div class="a t" style="left:774.50px;top:537.60px;height:20px;line-height:20px;font-family:'Liberation Mono',monospace;font-size:12.4px;color:#222;transform:scaleX(0.8669);transform-origin:0 50%">MMS_BOOLEAN</div><div class="a t" style="left:860.5px;top:537.5px;height:20px;line-height:20px;font-size:12.5px;color:#000;letter-spacing:0.1px;">2024/6/12 16:30:39</div><div class="a t" style="left:982.5px;top:537.5px;height:20px;line-height:20px;font-size:12.5px;color:#000;letter-spacing:-0.74px;">REASON_INTEGRITY</div><div class="a t" style="left:1106px;top:537.5px;height:20px;line-height:20px;font-size:13px;color:#000;letter-spacing:-1.0px;">数据的状态值</div><svg class="a" style="left:284px;top:563.5px" width="16" height="16" viewBox="0 0 16 16"><rect x="0" y="0" width="16" height="16" fill="#6aa84f"/><text x="2.4000000000000004" y="11.6" font-family="Liberation Sans" font-style="italic" font-weight="bold" font-size="10" fill="#f3f3ea" textLength="11.2" lengthAdjust="spacingAndGlyphs">DA</text></svg><svg class="a" style="left:305px;top:563.5px" width="17" height="16" viewBox="0 0 17 16"><rect x="0" y="0" width="17" height="16" fill="#1f4f8f"/><text x="2.5500000000000007" y="11.6" font-family="Liberation Sans" font-style="italic" font-weight="bold" font-size="10" fill="#f3f3ea" textLength="11.899999999999999" lengthAdjust="spacingAndGlyphs">ST</text></svg><div class="a t" style="left:327.50px;top:562.17px;height:20px;line-height:20px;font-family:'Liberation Mono',monospace;font-size:14px;color:#111;transform:scaleX(0.8536);transform-origin:0 50%">simpleIOGenericIO/GGIO1.SPCS05.stVal</div><div class="a t" style="left:598.50px;top:562.17px;height:20px;line-height:20px;font-family:'Liberation Mono',monospace;font-size:14px;color:#111;transform:scaleX(0.8536);transform-origin:0 50%">False</div><div class="a" style="left:705.5px;top:563.0px;width:54px;height:18.5px;background:#e8eefe;border:1px solid #9fbaf2;border-radius:3px"></div><div class="a t" style="left:709.50px;top:562.60px;height:20px;line-height:20px;font-family:'Liberation Mono',monospace;font-size:12.4px;color:#222;transform:scaleX(0.8669);transform-origin:0 50%">BOOLEAN</div><div class="a" style="left:770.5px;top:563.0px;width:80.5px;height:18.5px;background:#fff1e3;border:1px solid #f4caa2;border-radius:3px"></div><div class="a t" style="left:774.50px;top:562.60px;height:20px;line-height:20px;font-family:'Liberation Mono',monospace;font-size:12.4px;color:#222;transform:scaleX(0.8669);transform-origin:0 50%">MMS_BOOLEAN</div><div class="a t" style="left:860.5px;top:562.5px;height:20px;line-height:20px;font-size:12.5px;color:#000;letter-spacing:0.1px;">2024/6/12 16:30:39</div><div class="a t" style="left:982.5px;top:562.5px;height:20px;line-height:20px;font-size:12.5px;color:#000;letter-spacing:-0.74px;">REASON_INTEGRITY</div><div class="a t" style="left:1106px;top:562.5px;height:20px;line-height:20px;font-size:13px;color:#000;letter-spacing:-1.0px;">数据的状态值</div><div class="a" style="left:264px;top:585px;width:943px;height:25px;background:#f0f0f0;"></div><svg class="a" style="left:284px;top:588.5px" width="16" height="16" viewBox="0 0 16 16"><rect x="0" y="0" width="16" height="16" fill="#6aa84f"/><text x="2.4000000000000004" y="11.6" font-family="Liberation Sans" font-style="italic" font-weight="bold" font-size="10" fill="#f3f3ea" textLength="11.2" lengthAdjust="spacingAndGlyphs">DA</text></svg><svg class="a" style="left:305px;top:588.5px" width="17" height="16" viewBox="0 0 17 16"><rect x="0" y="0" width="17" height="16" fill="#1f4f8f"/><text x="2.5500000000000007" y="11.6" font-family="Liberation Sans" font-style="italic" font-weight="bold" font-size="10" fill="#f3f3ea" textLength="11.899999999999999" lengthAdjust="spacingAndGlyphs">ST</text></svg><div class="a t" style="left:327.50px;top:587.17px;height:20px;line-height:20px;font-family:'Liberation Mono',monospace;font-size:14px;color:#111;transform:scaleX(0.8536);transform-origin:0 50%">simpleIOGenericIO/GGIO1.SPCS06.stVal</div><div class="a t" style="left:598.50px;top:587.17px;height:20px;line-height:20px;font-family:'Liberation Mono',monospace;font-size:14px;color:#111;transform:scaleX(0.8536);transform-origin:0 50%">False</div><div class="a" style="left:705.5px;top:588.0px;width:54px;height:18.5px;background:#e8eefe;border:1px solid #9fbaf2;border-radius:3px"></div><div class="a t" style="left:709.50px;top:587.60px;height:20px;line-height:20px;font-family:'Liberation Mono',monospace;font-size:12.4px;color:#222;transform:scaleX(0.8669);transform-origin:0 50%">BOOLEAN</div><div class="a" style="left:770.5px;top:588.0px;width:80.5px;height:18.5px;background:#fff1e3;border:1px solid #f4caa2;border-radius:3px"></div><div class="a t" style="left:774.50px;top:587.60px;height:20px;line-height:20px;font-family:'Liberation Mono',monospace;font-size:12.4px;color:#222;transform:scaleX(0.8669);transform-origin:0 50%">MMS_BOOLEAN</div><div class="a t" style="left:860.5px;top:587.5px;height:20px;line-height:20px;font-size:12.5px;color:#000;letter-spacing:0.1px;">2024/6/12 16:30:39</div><div class="a t" style="left:982.5px;top:587.5px;height:20px;line-height:20px;font-size:12.5px;color:#000;letter-spacing:-0.74px;">REASON_INTEGRITY</div><div class="a t" style="left:1106px;top:587.5px;height:20px;line-height:20px;font-size:13px;color:#000;letter-spacing:-1.0px;">数据的状态值</div><svg class="a" style="left:284px;top:613.5px" width="16" height="16" viewBox="0 0 16 16"><rect x="0" y="0" width="16" height="16" fill="#6aa84f"/><text x="2.4000000000000004" y="11.6" font-family="Liberation Sans" font-style="italic" font-weight="bold" font-size="10" fill="#f3f3ea" textLength="11.2" lengthAdjust="spacingAndGlyphs">DA</text></svg><svg class="a" style="left:305px;top:613.5px" width="17" height="16" viewBox="0 0 17 16"><rect x="0" y="0" width="17" height="16" fill="#1f4f8f"/><text x="2.5500000000000007" y="11.6" font-family="Liberation Sans" font-style="italic" font-weight="bold" font-size="10" fill="#f3f3ea" textLength="11.899999999999999" lengthAdjust="spacingAndGlyphs">ST</text></svg><div class="a t" style="left:327.50px;top:612.17px;height:20px;line-height:20px;font-family:'Liberation Mono',monospace;font-size:14px;color:#111;transform:scaleX(0.8536);transform-origin:0 50%">simpleIOGenericIO/GGIO1.SPCS07.stVal</div><div class="a t" style="left:598.50px;top:612.17px;height:20px;line-height:20px;font-family:'Liberation Mono',monospace;font-size:14px;color:#111;transform:scaleX(0.8536);transform-origin:0 50%">False</div><div class="a" style="left:705.5px;top:613.0px;width:54px;height:18.5px;background:#e8eefe;border:1px solid #9fbaf2;border-radius:3px"></div><div class="a t" style="left:709.50px;top:612.60px;height:20px;line-height:20px;font-family:'Liberation Mono',monospace;font-size:12.4px;color:#222;transform:scaleX(0.8669);transform-origin:0 50%">BOOLEAN</div><div class="a" style="left:770.5px;top:613.0px;width:80.5px;height:18.5px;background:#fff1e3;border:1px solid #f4caa2;border-radius:3px"></div><div class="a t" style="left:774.50px;top:612.60px;height:20px;line-height:20px;font-family:'Liberation Mono',monospace;font-size:12.4px;color:#222;transform:scaleX(0.8669);transform-origin:0 50%">MMS_BOOLEAN</div><div class="a t" style="left:860.5px;top:612.5px;height:20px;line-height:20px;font-size:12.5px;color:#000;letter-spacing:0.1px;">2024/6/12 16:30:39</div><div class="a t" style="left:982.5px;top:612.5px;height:20px;line-height:20px;font-size:12.5px;color:#000;letter-spacing:-0.74px;">REASON_INTEGRITY</div><div class="a t" style="left:1106px;top:612.5px;height:20px;line-height:20px;font-size:13px;color:#000;letter-spacing:-1.0px;">数据的状态值</div><div class="a" style="left:264px;top:635px;width:943px;height:25px;background:#f0f0f0;"></div><svg class="a" style="left:284px;top:638.5px" width="16" height="16" viewBox="0 0 16 16"><rect x="0" y="0" width="16" height="16" fill="#6aa84f"/><text x="2.4000000000000004" y="11.6" font-family="Liberation Sans" font-style="italic" font-weight="bold" font-size="10" fill="#f3f3ea" textLength="11.2" lengthAdjust="spacingAndGlyphs">DA</text></svg><svg class="a" style="left:305px;top:638.5px" width="17" height="16" viewBox="0 0 17 16"><rect x="0" y="0" width="17" height="16" fill="#1f4f8f"/><text x="2.5500000000000007" y="11.6" font-family="Liberation Sans" font-style="italic" font-weight="bold" font-size="10" fill="#f3f3ea" textLength="11.899999999999999" lengthAdjust="spacingAndGlyphs">ST</text></svg><div class="a t" style="left:327.50px;top:637.17px;height:20px;line-height:20px;font-family:'Liberation Mono',monospace;font-size:14px;color:#111;transform:scaleX(0.8536);transform-origin:0 50%">simpleIOGenericIO/GGIO1.SPCS08.stVal</div><div class="a t" style="left:598.50px;top:637.17px;height:20px;line-height:20px;font-family:'Liberation Mono',monospace;font-size:14px;color:#111;transform:scaleX(0.8536);transform-origin:0 50%">False</div><div class="a" style="left:705.5px;top:638.0px;width:54px;height:18.5px;background:#e8eefe;border:1px solid #9fbaf2;border-radius:3px"></div><div class="a t" style="left:709.50px;top:637.60px;height:20px;line-height:20px;font-family:'Liberation Mono',monospace;font-size:12.4px;color:#222;transform:scaleX(0.8669);transform-origin:0 50%">BOOLEAN</div><div class="a" style="left:770.5px;top:638.0px;width:80.5px;height:18.5px;background:#fff1e3;border:1px solid #f4caa2;border-radius:3px"></div><div class="a t" style="left:774.50px;top:637.60px;height:20px;line-height:20px;font-family:'Liberation Mono',monospace;font-size:12.4px;color:#222;transform:scaleX(0.8669);transform-origin:0 50%">MMS_BOOLEAN</div><div class="a t" style="left:860.5px;top:637.5px;height:20px;line-height:20px;font-size:12.5px;color:#000;letter-spacing:0.1px;">2024/6/12 16:30:39</div><div class="a t" style="left:982.5px;top:637.5px;height:20px;line-height:20px;font-size:12.5px;color:#000;letter-spacing:-0.74px;">REASON_INTEGRITY</div><div class="a t" style="left:1106px;top:637.5px;height:20px;line-height:20px;font-size:13px;color:#000;letter-spacing:-1.0px;">数据的状态值</div><svg class="a" style="left:284px;top:663.5px" width="16" height="16" viewBox="0 0 16 16"><rect x="0" y="0" width="16" height="16" fill="#6aa84f"/><text x="2.4000000000000004" y="11.6" font-family="Liberation Sans" font-style="italic" font-weight="bold" font-size="10" fill="#f3f3ea" textLength="11.2" lengthAdjust="spacingAndGlyphs">DA</text></svg><svg class="a" style="left:305px;top:663.5px" width="17" height="16" viewBox="0 0 17 16"><rect x="0" y="0" width="17" height="16" fill="#1f4f8f"/><text x="2.5500000000000007" y="11.6" font-family="Liberation Sans" font-style="italic" font-weight="bold" font-size="10" fill="#f3f3ea" textLength="11.899999999999999" lengthAdjust="spacingAndGlyphs">ST</text></svg><div class="a t" style="left:327.50px;top:662.17px;height:20px;line-height:20px;font-family:'Liberation Mono',monospace;font-size:14px;color:#111;transform:scaleX(0.8536);transform-origin:0 50%">simpleIOGenericIO/GGIO1.SPCS09.stVal</div><div class="a t" style="left:598.50px;top:662.17px;height:20px;line-height:20px;font-family:'Liberation Mono',monospace;font-size:14px;color:#111;transform:scaleX(0.8536);transform-origin:0 50%">False</div><div class="a" style="left:705.5px;top:663.0px;width:54px;height:18.5px;background:#e8eefe;border:1px solid #9fbaf2;border-radius:3px"></div><div class="a t" style="left:709.50px;top:662.60px;height:20px;line-height:20px;font-family:'Liberation Mono',monospace;font-size:12.4px;color:#222;transform:scaleX(0.8669);transform-origin:0 50%">BOOLEAN</div><div class="a" style="left:770.5px;top:663.0px;width:80.5px;height:18.5px;background:#fff1e3;border:1px solid #f4caa2;border-radius:3px"></div><div class="a t" style="left:774.50px;top:662.60px;height:20px;line-height:20px;font-family:'Liberation Mono',monospace;font-size:12.4px;color:#222;transform:scaleX(0.8669);transform-origin:0 50%">MMS_BOOLEAN</div><div class="a t" style="left:860.5px;top:662.5px;height:20px;line-height:20px;font-size:12.5px;color:#000;letter-spacing:0.1px;">2024/6/12 16:30:39</div><div class="a t" style="left:982.5px;top:662.5px;height:20px;line-height:20px;font-size:12.5px;color:#000;letter-spacing:-0.74px;">REASON_INTEGRITY</div><div class="a t" style="left:1106px;top:662.5px;height:20px;line-height:20px;font-size:13px;color:#000;letter-spacing:-1.0px;">数据的状态值</div><div class="a" style="left:264px;top:685px;width:943px;height:19px;background:#f0f0f0;"></div><svg class="a" style="left:284px;top:688.5px" width="16" height="16" viewBox="0 0 16 16"><rect x="0" y="0" width="16" height="16" fill="#6aa84f"/><text x="2.4000000000000004" y="11.6" font-family="Liberation Sans" font-style="italic" font-weight="bold" font-size="10" fill="#f3f3ea" textLength="11.2" lengthAdjust="spacingAndGlyphs">DA</text></svg><svg class="a" style="left:305px;top:688.5px" width="17" height="16" viewBox="0 0 17 16"><rect x="0" y="0" width="17" height="16" fill="#1f4f8f"/><text x="2.5500000000000007" y="11.6" font-family="Liberation Sans" font-style="italic" font-weight="bold" font-size="10" fill="#f3f3ea" textLength="11.899999999999999" lengthAdjust="spacingAndGlyphs">ST</text></svg><div class="a t" style="left:327.50px;top:687.17px;height:20px;line-height:20px;font-family:'Liberation Mono',monospace;font-size:14px;color:#111;transform:scaleX(0.8536);transform-origin:0 50%">simpleIOGenericIO/GGIO1.SPCS02.stSeld</div><div class="a t" style="left:598.50px;top:687.17px;height:20px;line-height:20px;font-family:'Liberation Mono',monospace;font-size:14px;color:#111;transform:scaleX(0.8536);transform-origin:0 50%">False</div><div class="a" style="left:705.5px;top:688.0px;width:54px;height:18.5px;background:#e8eefe;border:1px solid #9fbaf2;border-radius:3px"></div><div class="a t" style="left:709.50px;top:687.60px;height:20px;line-height:20px;font-family:'Liberation Mono',monospace;font-size:12.4px;color:#222;transform:scaleX(0.8669);transform-origin:0 50%">BOOLEAN</div><div class="a" style="left:770.5px;top:688.0px;width:80.5px;height:18.5px;background:#fff1e3;border:1px solid #f4caa2;border-radius:3px"></div><div class="a t" style="left:774.50px;top:687.60px;height:20px;line-height:20px;font-family:'Liberation Mono',monospace;font-size:12.4px;color:#222;transform:scaleX(0.8669);transform-origin:0 50%">MMS_BOOLEAN</div><div class="a t" style="left:860.5px;top:687.5px;height:20px;line-height:20px;font-size:12.5px;color:#000;letter-spacing:0.1px;">2024/6/12 16:30:39</div><div class="a t" style="left:982.5px;top:687.5px;height:20px;line-height:20px;font-size:12.5px;color:#000;letter-spacing:-0.74px;">REASON_INTEGRITY</div><div class="a t" style="left:1106px;top:687.5px;height:20px;line-height:20px;font-size:13px;color:#000;letter-spacing:-1.0px;">可控数据在“已<span style="font-size:12.5px;letter-spacing:0px">...</span></div><div class="a" style="left:264px;top:704px;width:961px;height:1px;background:#cfcfcf;"></div><div class="a" style="left:1207px;top:460px;width:18px;height:244px;background:#f4f4f4;"></div><svg class="a" style="left:1211px;top:466px" width="9" height="6" viewBox="0 0 9 6"><path d="M0.5 5.5 L4.5 0.5 L8.5 5.5 Z" fill="#a0a0a0"/></svg><svg class="a" style="left:1211px;top:691px" width="9" height="6" viewBox="0 0 9 6"><path d="M0.5 0.5 L4.5 5.5 L8.5 0.5 Z" fill="#a0a0a0"/></svg><div class="a" style="left:1211px;top:477px;width:9px;height:170px;background:#c2c2c6;border-radius:1px"></div><div class="a" style="left:372px;top:104px;width:482px;height:517px;background:#f7f7f7;border:1px solid #3b5164;box-shadow:0 3px 14px rgba(0,0,0,0.32)"></div><div class="a" style="left:372px;top:104px;width:482px;height:30px;background:#243e55;"></div><svg class="a" style="left:372px;top:104px" width="30" height="30" viewBox="0 0 30 30"><path d="M14.8 7.1 L20.4 7.1 L18.8 12.8 L21.1 14.1 L14.5 22.7 L16.1 15.8 L13.2 15.5 Z" fill="#f8b62d"/><path d="M9.3 14.6 L11.7 11.3 L12.6 13.6 L13.3 15.6 L11.2 18.6 L11.9 15.4 Z" fill="#f8b62d"/><path d="M20.6 11.2 L22.7 8.3 L23.2 11.6 L24.8 13.6 L22 17.3 L22.6 14 L20.8 13.4 Z" fill="#f8b62d"/></svg><div class="a t" style="left:402px;top:110.0px;height:20px;line-height:20px;font-size:13px;color:#ffffff;letter-spacing:-1.0px;">报告控制块</div><div class="a" style="left:734px;top:119px;width:10px;height:1px;background:#ffffff;"></div><div class="a" style="left:779px;top:114px;width:10px;height:10px;background:none;border:1px solid #51697e"></div><svg class="a" style="left:824px;top:113.5px" width="11" height="11" viewBox="0 0 11 11"><path d="M0.5 0.5 L10.5 10.5 M10.5 0.5 L0.5 10.5" stroke="#fff" stroke-width="1.3"/></svg><div class="a t" style="left:310px;top:152.0px;height:20px;line-height:20px;font-size:13px;color:#000;letter-spacing:-1.0px;width:200px;text-align:right;">报告控制块名<span style="font-size:12.5px;letter-spacing:0px">:</span></div><div class="a t" style="left:318px;top:184.0px;height:20px;line-height:20px;font-size:13px;color:#000;letter-spacing:-1.0px;width:200px;text-align:right;">报告标识符（<span style="font-size:12.5px;letter-spacing:0px">RptId</span>）：</div><div class="a t" style="left:318px;top:216.0px;height:20px;line-height:20px;font-size:13px;color:#000;letter-spacing:-1.0px;width:200px;text-align:right;">数据集引用（<span style="font-size:12.5px;letter-spacing:0px">DatSet</span>）：</div><div class="a t" style="left:318px;top:248.0px;height:20px;line-height:20px;font-size:13px;color:#000;letter-spacing:-1.0px;width:200px;text-align:right;">完整性周期（<span style="font-size:12.5px;letter-spacing:0px">IntgPd</span>）：</div><div class="a" style="left:519px;top:148px;width:324px;height:25.5px;background:#ffffff;border:1px solid #dadada"></div><div class="a t" style="left:524.5px;top:151.75px;height:20px;line-height:20px;font-size:12.5px;color:#000;letter-spacing:-0.1px;">simpleIOGenericIO/LLN0.RP.ControlEventsRCB01</div><div class="a" style="left:519px;top:180px;width:324px;height:25.5px;background:#ffffff;border:1px solid #dadada"></div><div class="a t" style="left:524.5px;top:183.75px;height:20px;line-height:20px;font-size:12.5px;color:#000;">ControlEvents</div><div class="a" style="left:519px;top:212px;width:324px;height:25.5px;background:#ffffff;border:1px solid #dadada"></div><div class="a t" style="left:524.5px;top:215.75px;height:20px;line-height:20px;font-size:12.5px;color:#000;">simpleIOGenericIO/LLN0$ControlEvents</div><div class="a" style="left:519px;top:244px;width:324px;height:25.5px;background:#ffffff;border:1px solid #dadada"></div><div class="a t" style="left:524.5px;top:247.75px;height:20px;line-height:20px;font-size:12.5px;color:#000;">1000</div><svg class="a" style="left:829px;top:223px" width="8" height="5" viewBox="0 0 8 5"><path d="M0 0 L8 0 L4 5 Z" fill="#7a7a7a"/></svg><svg class="a" style="left:519px;top:280px" width="18" height="18" viewBox="0 0 18 18"><rect x="0.5" y="0.5" width="17" height="17" rx="3" fill="#8ec0f8" stroke="#2f7fd0" stroke-width="1"/><path d="M2.6 8.8 L8.2 13.6 L15.2 2.8" fill="none" stroke="#fff" stroke-width="2.6"/></svg><div class="a t" style="left:542px;top:280.0px;height:20px;line-height:20px;font-size:13px;color:#000;letter-spacing:-1.0px;">报告使能（<span style="font-size:12.5px;letter-spacing:0px">RptEna</span>）</div><div class="a" style="left:383px;top:317px;width:227px;height:246px;background:none;border:1px solid #c2c2c2;border-radius:4px"></div><div class="a" style="left:394px;top:308px;width:122px;height:20px;background:#f7f7f7;"></div><div class="a t" style="left:399px;top:308.3px;height:20px;line-height:20px;font-size:13px;color:#000;letter-spacing:-1.0px;">触发选项（<span style="font-size:12.5px;letter-spacing:0px">TrgOps</span>）</div><div class="a" style="left:616px;top:317px;width:227px;height:246px;background:none;border:1px solid #c2c2c2;border-radius:4px"></div><div class="a" style="left:627px;top:308px;width:199px;height:20px;background:#f7f7f7;"></div><div class="a t" style="left:632px;top:308.3px;height:20px;line-height:20px;font-size:13px;color:#000;letter-spacing:-1.0px;">包含在报告中的选项域（<span style="font-size:12.5px;letter-spacing:0px">OptFlds</span>）</div><svg class="a" style="left:399px;top:333px" width="18" height="18" viewBox="0 0 18 18"><rect x="0.5" y="0.5" width="17" height="17" rx="3" fill="#8ec0f8" stroke="#2f7fd0" stroke-width="1"/><path d="M2.6 8.8 L8.2 13.6 L15.2 2.8" fill="none" stroke="#fff" stroke-width="2.6"/></svg><div class="a t" style="left:422px;top:333.0px;height:20px;line-height:20px;font-size:13px;color:#000;letter-spacing:-1.0px;">数据变化（<span style="font-size:12.5px;letter-spacing:0px">dchg</span>）</div><svg class="a" style="left:399px;top:361px" width="18" height="18" viewBox="0 0 18 18"><rect x="0.5" y="0.5" width="17" height="17" rx="3" fill="#8ec0f8" stroke="#2f7fd0" stroke-width="1"/><path d="M2.6 8.8 L8.2 13.6 L15.2 2.8" fill="none" stroke="#fff" stroke-width="2.6"/></svg><div class="a t" style="left:422px;top:361.0px;height:20px;line-height:20px;font-size:13px;color:#000;letter-spacing:-1.0px;">品质变化（<span style="font-size:12.5px;letter-spacing:0px">qchg</span>）</div><svg class="a" style="left:399px;top:389px" width="18" height="18" viewBox="0 0 18 18"><rect x="0.5" y="0.5" width="17" height="17" rx="3" fill="#8ec0f8" stroke="#2f7fd0" stroke-width="1"/><path d="M2.6 8.8 L8.2 13.6 L15.2 2.8" fill="none" stroke="#fff" stroke-width="2.6"/></svg><div class="a t" style="left:422px;top:389.0px;height:20px;line-height:20px;font-size:13px;color:#000;letter-spacing:-1.0px;">数据刷新（<span style="font-size:12.5px;letter-spacing:0px">dupd</span>）</div><svg class="a" style="left:399px;top:417px" width="18" height="18" viewBox="0 0 18 18"><rect x="0.5" y="0.5" width="17" height="17" rx="3" fill="#8ec0f8" stroke="#2f7fd0" stroke-width="1"/><path d="M2.6 8.8 L8.2 13.6 L15.2 2.8" fill="none" stroke="#fff" stroke-width="2.6"/></svg><div class="a t" style="left:422px;top:417.0px;height:20px;line-height:20px;font-size:13px;color:#000;letter-spacing:-1.0px;">完整性（<span style="font-size:12.5px;letter-spacing:0px">Integrity</span>）</div><svg class="a" style="left:399px;top:445px" width="18" height="18" viewBox="0 0 18 18"><rect x="0.5" y="0.5" width="17" height="17" rx="3" fill="#8ec0f8" stroke="#2f7fd0" stroke-width="1"/><path d="M2.6 8.8 L8.2 13.6 L15.2 2.8" fill="none" stroke="#fff" stroke-width="2.6"/></svg><div class="a t" style="left:422px;top:445.0px;height:20px;line-height:20px;font-size:13px;color:#000;letter-spacing:-1.0px;">总召唤（<span style="font-size:12.5px;letter-spacing:0px">GI</span>）</div><svg class="a" style="left:632px;top:333px" width="18" height="18" viewBox="0 0 18 18"><rect x="0.5" y="0.5" width="17" height="17" rx="3" fill="#8ec0f8" stroke="#2f7fd0" stroke-width="1"/><path d="M2.6 8.8 L8.2 13.6 L15.2 2.8" fill="none" stroke="#fff" stroke-width="2.6"/></svg><div class="a t" style="left:654px;top:333.0px;height:20px;line-height:20px;font-size:12.5px;color:#000;letter-spacing:0.35px;">sequence-number</div><svg class="a" style="left:632px;top:361px" width="18" height="18" viewBox="0 0 18 18"><rect x="0.5" y="0.5" width="17" height="17" rx="3" fill="#8ec0f8" stroke="#2f7fd0" stroke-width="1"/><path d="M2.6 8.8 L8.2 13.6 L15.2 2.8" fill="none" stroke="#fff" stroke-width="2.6"/></svg><div class="a t" style="left:654px;top:361.0px;height:20px;line-height:20px;font-size:12.5px;color:#000;letter-spacing:0.35px;">report-time-stamp</div><svg class="a" style="left:632px;top:389px" width="18" height="18" viewBox="0 0 18 18"><rect x="0.5" y="0.5" width="17" height="17" rx="3" fill="#8ec0f8" stroke="#2f7fd0" stroke-width="1"/><path d="M2.6 8.8 L8.2 13.6 L15.2 2.8" fill="none" stroke="#fff" stroke-width="2.6"/></svg><div class="a t" style="left:654px;top:389.0px;height:20px;line-height:20px;font-size:12.5px;color:#000;letter-spacing:0.35px;">reason-for-inclusion</div><svg class="a" style="left:632px;top:417px" width="18" height="18" viewBox="0 0 18 18"><rect x="0.5" y="0.5" width="17" height="17" rx="3" fill="#8ec0f8" stroke="#2f7fd0" stroke-width="1"/><path d="M2.6 8.8 L8.2 13.6 L15.2 2.8" fill="none" stroke="#fff" stroke-width="2.6"/></svg><div class="a t" style="left:654px;top:417.0px;height:20px;line-height:20px;font-size:12.5px;color:#000;letter-spacing:0.35px;">data-set-name</div><svg class="a" style="left:632px;top:445px" width="18" height="18" viewBox="0 0 18 18"><rect x="0.5" y="0.5" width="17" height="17" rx="3" fill="#fff" stroke="#dcdcdc" stroke-width="1"/></svg><div class="a t" style="left:654px;top:445.0px;height:20px;line-height:20px;font-size:12.5px;color:#000;letter-spacing:0.35px;">data-reference</div><svg class="a" style="left:632px;top:473px" width="18" height="18" viewBox="0 0 18 18"><rect x="0.5" y="0.5" width="17" height="17" rx="3" fill="#8ec0f8" stroke="#2f7fd0" stroke-width="1"/><path d="M2.6 8.8 L8.2 13.6 L15.2 2.8" fill="none" stroke="#fff" stroke-width="2.6"/></svg><div class="a t" style="left:654px;top:473.0px;height:20px;line-height:20px;font-size:12.5px;color:#000;letter-spacing:0.35px;">buffer-overflow</div><svg class="a" style="left:632px;top:501px" width="18" height="18" viewBox="0 0 18 18"><rect x="0.5" y="0.5" width="17" height="17" rx="3" fill="#8ec0f8" stroke="#2f7fd0" stroke-width="1"/><path d="M2.6 8.8 L8.2 13.6 L15.2 2.8" fill="none" stroke="#fff" stroke-width="2.6"/></svg><div class="a t" style="left:654px;top:501.0px;height:20px;line-height:20px;font-size:12.5px;color:#000;letter-spacing:0.35px;">entryID</div><svg class="a" style="left:632px;top:529px" width="18" height="18" viewBox="0 0 18 18"><rect x="0.5" y="0.5" width="17" height="17" rx="3" fill="#8ec0f8" stroke="#2f7fd0" stroke-width="1"/><path d="M2.6 8.8 L8.2 13.6 L15.2 2.8" fill="none" stroke="#fff" stroke-width="2.6"/></svg><div class="a t" style="left:654px;top:529.0px;height:20px;line-height:20px;font-size:12.5px;color:#000;letter-spacing:0.35px;">conf-revision</div><div class="a" style="left:373px;top:583px;width:480px;height:1px;background:#dcdcdc;"></div><div class="a" style="left:373px;top:584px;width:480px;height:36px;background:#ececec;"></div><div class="a" style="left:718px;top:589px;width:58px;height:26px;background:#a9d1fa;border:1px solid #4f92d6;border-radius:3px"></div><div class="a t" style="left:718px;top:593.0px;height:20px;line-height:20px;font-size:13px;color:#000;letter-spacing:-1.0px;width:58px;text-align:center;">确定</div><div class="a" style="left:786.5px;top:589px;width:56px;height:26px;background:#ffffff;border:1px solid #dedede;border-radius:3px"></div><div class="a t" style="left:786.5px;top:593.0px;height:20px;line-height:20px;font-size:13px;color:#000;letter-spacing:-1.0px;width:56px;text-align:center;">取消</div>
<!--PART2-->
</body></html>
